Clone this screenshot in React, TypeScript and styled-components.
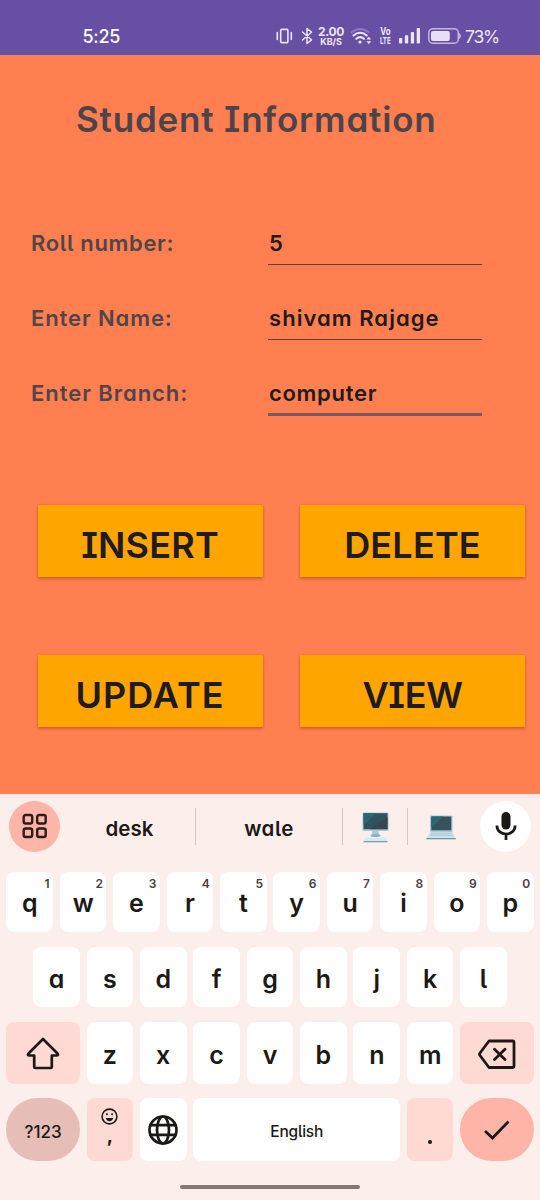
import React from "react";
import styled, { createGlobalStyle } from "styled-components";

const GlobalStyle = createGlobalStyle`
  * { box-sizing: border-box; }
  body { margin: 0; background: #fbeeeb; }
  button, input { font: inherit; border: 0; padding: 0; margin: 0; }
  svg { display: block; flex: none; overflow: visible; }
`;

const Screen = styled.main`
  width: 540px;
  height: 1200px;
  overflow: hidden;
  display: flex;
  flex-direction: column;
  font-family: Inter, "Noto Sans", sans-serif;
  font-feature-settings: "cv11" 1, "cv08" 1, "cv05" 1;
  background: #fbeeeb;
  color: #1c1b1f;
`;

const StatusBar = styled.header`
  height: 55px;
  flex: none;
  background: #6750a4;
  color: #fff;
  display: flex;
  align-items: center;
  padding: 18px 41px 0 82.5px;
`;

const Clock = styled.time`
  font-size: 18px;
  font-weight: 500;
  line-height: 36px;
  letter-spacing: -0.3px;
  font-feature-settings: normal;
  margin-right: auto;
`;

const StatusIcons = styled.div`
  display: flex;
  align-items: center;
  padding-bottom: 2px;
  color: #ece4f8;
`;

const StatusItem = styled.span<{ $ml: number }>`
  margin-left: ${(p) => p.$ml}px;
`;

const Stack = styled.div<{ $w: number; $ml: number }>`
  width: ${(p) => p.$w}px;
  margin-left: ${(p) => p.$ml}px;
  padding-top: 1px;
  display: flex;
  flex-direction: column;
  align-items: center;
  white-space: nowrap;
  font-feature-settings: normal;
  font-weight: 700;
`;

const Tiny = styled.span<{ $size: number; $ls?: number; $lh?: number; $squeeze?: number }>`
  font-size: ${(p) => p.$size}px;
  line-height: ${(p) => p.$lh ?? 9}px;
  letter-spacing: ${(p) => p.$ls ?? 0}px;
  transform: scaleX(${(p) => p.$squeeze ?? 1});
`;

const Percent = styled.span`
  width: 34px;
  margin-left: 4px;
  font-size: 17.5px;
  line-height: 34px;
  padding-top: 2px;
  letter-spacing: -1.2px;
  font-feature-settings: normal;
`;

const Form = styled.section`
  height: 738.5px;
  flex: none;
  background: #ff7f50;
  display: flex;
  flex-direction: column;
`;

const Title = styled.h1`
  margin: 41px 0 0 76px;
  height: 46px;
  line-height: 46px;
  font-size: 35px;
  font-weight: 600;
  letter-spacing: 0.8px;
  color: #4d444b;
  white-space: nowrap;
`;

const Fields = styled.div`
  margin: 75px 0 0 31px;
  display: flex;
  flex-direction: column;
`;

const Field = styled.label`
  height: 75px;
  display: grid;
  grid-template-columns: 237px 213.5px;
  align-items: start;
`;

const FieldName = styled.span<{ $ls: number }>`
  font-size: 22px;
  font-weight: 600;
  line-height: 52px;
  letter-spacing: ${(p) => p.$ls}px;
  color: #504549;
  white-space: nowrap;
`;

const FieldInput = styled.input<{ $ls: number; $focused?: boolean }>`
  width: 213.5px;
  height: ${(p) => (p.$focused ? 49 : 48)}px;
  padding: ${(p) => (p.$focused ? 6 : 5)}px 0 0 1px;
  background: transparent;
  outline: none;
  border-radius: 0;
  border-bottom: ${(p) => (p.$focused ? "3px solid #785866" : "1.5px solid #60403e")};
  font-size: 22px;
  font-weight: 600;
  letter-spacing: ${(p) => p.$ls}px;
  font-feature-settings: inherit;
  color: #211b1b;
`;

const Actions = styled.div`
  display: grid;
  grid-template-columns: 225px 225px;
  grid-auto-rows: 72px;
  gap: 78px 37.5px;
  margin: 63px 0 0 37.5px;
`;

const ActionButton = styled.button<{ $ls: number }>`
  background: #ffa500;
  color: #1f1b1e;
  box-shadow: 0 2px 3px rgba(110, 40, 0, 0.3), 0 0 2px rgba(110, 40, 0, 0.16);
  font-size: 36px;
  font-weight: 600;
  line-height: 64px;
  letter-spacing: ${(p) => p.$ls}px;
  padding: 8px 0 0;
`;

const Keyboard = styled.section`
  flex: 1;
  background: #fbeeeb;
  display: flex;
  flex-direction: column;
`;

const Suggestions = styled.div`
  height: 66px;
  display: flex;
  align-items: center;
  padding: 0 9px;
  margin-bottom: 12px;
`;

const RoundButton = styled.button<{ $bg: string; $lift?: number }>`
  width: 51px;
  height: 51px;
  border-radius: 50%;
  background: ${(p) => p.$bg};
  color: #2b1d1a;
  display: flex;
  align-items: center;
  justify-content: center;
  padding-bottom: ${(p) => p.$lift ?? 0}px;
`;

const Suggestion = styled.span<{ $w: number; $pl?: number; $ls?: number }>`
  width: ${(p) => p.$w}px;
  display: flex;
  justify-content: center;
  padding: 4px 0 0 ${(p) => p.$pl ?? 0}px;
  font-size: 20.5px;
  font-weight: 600;
  letter-spacing: ${(p) => p.$ls ?? 0}px;
  color: #1e1817;
`;

const EmojiSlot = styled.span<{ $w: number; $pr?: number; $pt?: number }>`
  width: ${(p) => p.$w}px;
  display: flex;
  justify-content: center;
  padding: ${(p) => p.$pt ?? 0}px ${(p) => p.$pr ?? 0}px 0 0;
`;

const Divider = styled.span`
  width: 1px;
  height: 37px;
  background: #d3c7c5;
`;

const KeyRow = styled.div<{ $h: number; $mb: number }>`
  height: ${(p) => p.$h}px;
  margin-bottom: ${(p) => p.$mb}px;
  display: flex;
  justify-content: center;
  gap: 6.8px;
`;

const tones = { plain: "#ffffff", pink: "#ffdad5", rose: "#e7bdb7", coral: "#ffb4a8" };

const KeyCap = styled.button<{ $w?: number; $tone?: keyof typeof tones; $round?: boolean }>`
  position: relative;
  width: ${(p) => p.$w ?? 46.6}px;
  height: 100%;
  border-radius: ${(p) => (p.$round ? "32px" : "8px")};
  background: ${(p) => tones[p.$tone ?? "plain"]};
  color: #1c1816;
  display: flex;
  align-items: center;
  justify-content: center;
`;

const Letter = styled.span`
  font-size: 25px;
  line-height: 30px;
  font-weight: 600;
  padding-top: 3px;
`;

const Hint = styled.sup`
  position: absolute;
  top: 4px;
  right: 3.5px;
  font-size: 12px;
  line-height: 15px;
  font-weight: 600;
  color: #46403f;
`;

const KeyText = styled.span<{ $size: number; $ls?: number }>`
  font-size: ${(p) => p.$size}px;
  font-weight: 500;
  letter-spacing: ${(p) => p.$ls ?? 0}px;
  padding-top: 4px;
`;

const CommaFace = styled.span`
  display: flex;
  flex-direction: column;
  align-items: center;
  height: 43px;
  font-size: 19px;
  font-weight: 700;
  line-height: 21px;
`;

const Dot = styled.span`
  width: 4px;
  height: 4px;
  border-radius: 50%;
  background: #1c1816;
  margin-top: 24px;
`;

const HomeBar = styled.div`
  width: 180px;
  height: 4.5px;
  border-radius: 3px;
  margin: 24px auto 0;
  background: #837875;
`;

const Line = ({ w, h, sw = 2.4, children }: { w: number; h: number; sw?: number; children: React.ReactNode }) => (
  <svg width={w} height={h} viewBox={`0 0 ${w} ${h}`} fill="none" stroke="currentColor" strokeWidth={sw} strokeLinecap="round" strokeLinejoin="round">
    {children}
  </svg>
);

/* Vibrate, Bluetooth */
const StatusLeft = () => (
  <Line w={37} h={18} sw={1.6}>
    <rect x="4.700" y="2.400" width="7.200" height="13.200" rx="1.200" />
    <path d="M1.300 5.500v7M15.300 5.500v7" />
    <path d="M26.500 5l9 7.800-4.500 3.700V1.500l4.500 3.700-9 7.800" strokeWidth="1.500" />
  </Line>
);

const Wifi = () => (
  <Line w={20} h={18} sw={2.1}>
    <path d="M.8 5.300c4.800-4.500 11.800-4.500 16.600 0" opacity=".28" />
    <path d="M2.500 8.500c3.900-3.600 9.400-3.600 13.200 0M5.300 11.800c2.300-2 5.400-2 7.600 0" />
    <circle cx="9" cy="15" r="1.600" fill="currentColor" stroke="none" />
    <path d="M15.400 12.500l2.400-2.700 2.400 2.700zM15.400 14.200l2.400 2.700 2.400-2.700z" fill="currentColor" stroke="none" />
  </Line>
);

const Signal = () => (
  <svg width="21" height="16" viewBox="0 0 21 16" fill="currentColor">
    <rect x="0" y="10" width="3.300" height="5.500" rx=".8" />
    <rect x="5.900" y="7.200" width="3.300" height="8.300" rx=".8" />
    <rect x="11.800" y="4" width="3.300" height="11.500" rx=".8" />
    <rect x="17.700" y="0" width="3.300" height="15.500" rx=".8" />
  </svg>
);

const Battery = () => (
  <svg width="33" height="16" viewBox="0 0 33 16" fill="none">
    <rect x=".8" y=".8" width="29.500" height="14.400" rx="4" stroke="#c3b6df" strokeWidth="1.500" />
    <rect x="3" y="3" width="18.800" height="10" rx="2" fill="#e8e1f5" />
    <path d="M31.300 5.500c1.400.8 1.400 4.200 0 5z" fill="#c3b6df" stroke="#c3b6df" />
  </svg>
);

const Desktop = () => (
  <svg width="27" height="31" viewBox="0 0 27 31">
    <path d="M10.500 19h6l.8 5h-7.600z" fill="#a9c8d8" />
    <ellipse cx="13.500" cy="23.500" rx="5" ry="1.600" fill="#86b3ca" />
    <path d="M3.500 25.500h20l2 3.500h-24z" fill="#d8e8f0" />
    <path d="M1.500 29h24v1.300h-24z" fill="#6fa4b5" />
    <rect x=".5" y=".5" width="26" height="18.500" rx="1" fill="#a6c9dc" />
    <rect x="1.500" y="1.200" width="24" height="16" fill="#31535f" />
    <path d="M1.500 1.200h13l-13 12z" fill="#2b6772" />
    <path d="M25.500 5v12.200H8z" fill="#3a464f" />
  </svg>
);

const Laptop = () => (
  <svg width="30" height="25" viewBox="0 0 30 25">
    <rect x="4" y=".5" width="22.500" height="16.500" rx="1" fill="#a6c9dc" />
    <rect x="5.300" y="1.500" width="20" height="13.800" fill="#36535d" />
    <path d="M5.300 1.500h12l-12 11z" fill="#2b6874" />
    <path d="M4 17h22.500l3 6H.8z" fill="#cfe1ec" />
    <path d="M5 18.300h20.500M4.300 20.300h22" stroke="#9fbccd" strokeWidth=".8" />
    <path d="M.3 23h29.500v1.300H.3z" fill="#679ba8" />
  </svg>
);

const Mic = () => (
  <svg width="22" height="30" viewBox="0 0 22 30" fill="none" stroke="#1c1816">
    <rect x="6.500" y="1" width="9" height="17.500" rx="4.500" fill="#1c1816" stroke="none" />
    <path d="M1.900 14.500c0 11.300 18.200 11.300 18.200 0M11 23v6" strokeWidth="2.700" />
  </svg>
);

const letters = (row: string) => row.split("").map((c) => <KeyCap key={c}><Letter>{c}</Letter></KeyCap>);

export default function App() {
  return (
    <Screen>
      <GlobalStyle />
      <StatusBar>
        <Clock>5:25</Clock>
        <StatusIcons>
          <StatusLeft />
          <Stack $w={26} $ml={5}>
            <Tiny $size={12} $ls={-0.3} $lh={10}>2.00</Tiny>
            <Tiny $size={9} $ls={-0.1}>KB/S</Tiny>
          </Stack>
          <StatusItem $ml={7}><Wifi /></StatusItem>
          <Stack $w={12} $ml={8}>
            <Tiny $size={10} $squeeze={0.8}>Vo</Tiny>
            <Tiny $size={9.5} $squeeze={0.65}>LTE</Tiny>
          </Stack>
          <StatusItem $ml={8}><Signal /></StatusItem>
          <StatusItem $ml={8}><Battery /></StatusItem>
          <Percent>73%</Percent>
        </StatusIcons>
      </StatusBar>

      <Form>
        <Title>Student Information</Title>
        <Fields>
          <Field>
            <FieldName $ls={0.65}>Roll number:</FieldName>
            <FieldInput $ls={0} defaultValue="5" />
          </Field>
          <Field>
            <FieldName $ls={0.9}>Enter Name:</FieldName>
            <FieldInput $ls={1.05} defaultValue="shivam Rajage" />
          </Field>
          <Field>
            <FieldName $ls={0.95}>Enter Branch:</FieldName>
            <FieldInput $ls={0.7} $focused defaultValue="computer" />
          </Field>
        </Fields>
        <Actions>
          <ActionButton $ls={0.2}>INSERT</ActionButton>
          <ActionButton $ls={0.2}>DELETE</ActionButton>
          <ActionButton $ls={1}>UPDATE</ActionButton>
          <ActionButton $ls={-0.3}>VIEW</ActionButton>
        </Actions>
      </Form>

      <Keyboard>
        <Suggestions>
          <RoundButton $bg={tones.coral} $lift={1} aria-label="Tools">
            <Line w={26} h={26} sw={2.4}>
              <rect x="1.700" y="2" width="8.500" height="8.500" rx="2" />
              <rect x="15.200" y="2" width="8.500" height="8.500" rx="2" />
              <rect x="1.700" y="15.500" width="8.500" height="8.500" rx="2" />
              <rect x="15.200" y="15.500" width="8.500" height="8.500" rx="2" />
            </Line>
          </RoundButton>
          <Suggestion $w={135} $pl={4}>desk</Suggestion>
          <Divider />
          <Suggestion $w={146} $ls={0.5}>wale</Suggestion>
          <Divider />
          <EmojiSlot $w={64} $pt={1}><Desktop /></EmojiSlot>
          <Divider />
          <EmojiSlot $w={72} $pr={6} $pt={2}><Laptop /></EmojiSlot>
          <RoundButton $bg="#fff" $lift={2} aria-label="Voice input"><Mic /></RoundButton>
        </Suggestions>

        <KeyRow $h={60.5} $mb={14.8}>
          {"qwertyuiop".split("").map((c, i) => (
            <KeyCap key={c}><Letter>{c}</Letter><Hint>{(i + 1) % 10}</Hint></KeyCap>
          ))}
        </KeyRow>
        <KeyRow $h={60.7} $mb={14.8}>{letters("asdfghjkl")}</KeyRow>
        <KeyRow $h={61.5} $mb={14.5}>
          <KeyCap $w={73.3} $tone="pink" aria-label="Shift">
            <Line w={34} h={33} sw={2.700}>
              <path d="M17 2L31.500 16.500q1.500 2-1 2H25.800v11.500q0 1-1 1H9.200q-1 0-1-1V18.500H3.500q-2.500 0-1-2z" />
            </Line>
          </KeyCap>
          {letters("zxcvbnm")}
          <KeyCap $w={73.3} $tone="pink" aria-label="Delete">
            <Line w={38} h={26} sw={2.800}>
              <path d="M11 1h23.500q1.500 0 1.500 1.500v23.500q0 1.500-1.500 1.500H11L2 15.500q-1-1.250 0-2.500zM16.500 9.200l10.500 10.200M27 9.200L16.500 19.400" />
            </Line>
          </KeyCap>
        </KeyRow>
        <KeyRow $h={62.5} $mb={0}>
          <KeyCap $w={73.3} $tone="rose" $round><KeyText $size={17}>?123</KeyText></KeyCap>
          <KeyCap $tone="pink">
            <CommaFace>
              <Line w={17} h={17} sw={1.6}>
                <circle cx="8.500" cy="8.500" r="7.400" />
                <path d="M4.800 10h7.400q-1 3.300-3.700 3.300T4.800 10z" fill="currentColor" stroke="none" />
                <circle cx="5.900" cy="6.300" r="1" fill="currentColor" stroke="none" />
                <circle cx="11.100" cy="6.300" r="1" fill="currentColor" stroke="none" />
              </Line>
              ,
            </CommaFace>
          </KeyCap>
          <KeyCap aria-label="Language">
            <Line w={30} h={30} sw={2.700}>
              <circle cx="15" cy="15" r="13.500" />
              <ellipse cx="15" cy="15" rx="6" ry="13.500" />
              <path d="M2.500 10.200h25M2.500 19.800h25" />
            </Line>
          </KeyCap>
          <KeyCap $w={206.8}><KeyText $size={15.5} $ls={-0.2}>English</KeyText></KeyCap>
          <KeyCap $tone="pink" aria-label="Period"><Dot /></KeyCap>
          <KeyCap $w={73.3} $tone="coral" $round aria-label="Done">
            <Line w={27} h={20} sw={2.700}><path d="M2 11l7.500 7L25.500 1.500" strokeLinecap="butt" strokeLinejoin="miter" /></Line>
          </KeyCap>
        </KeyRow>
        <HomeBar />
      </Keyboard>
    </Screen>
  );
}
